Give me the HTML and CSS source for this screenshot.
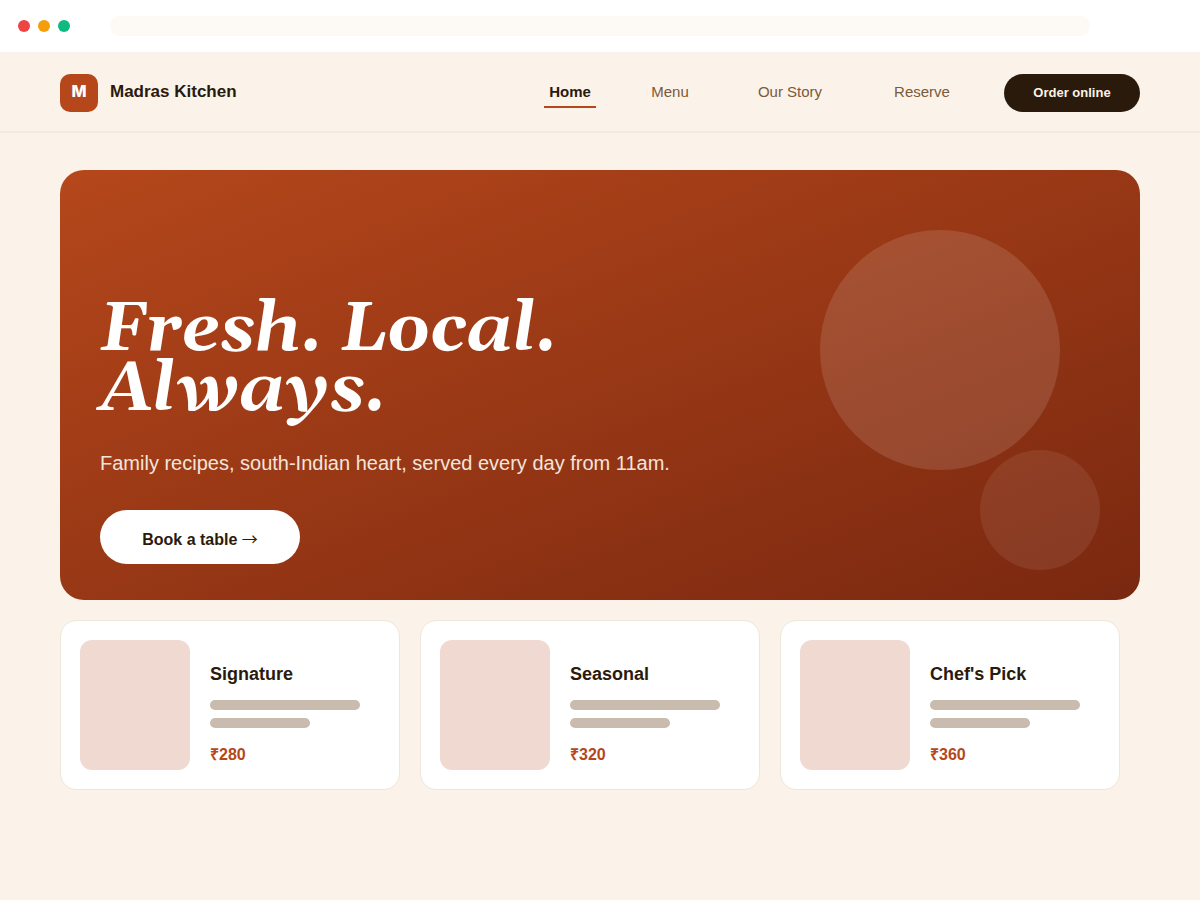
FILE: index.html
```html
<!DOCTYPE html>
<html lang="en">
<head>
<meta charset="utf-8">
<meta name="viewport" content="width=device-width, initial-scale=1">
<title>Madras Kitchen</title>
<link rel="stylesheet" href="styles.css">
</head>
<body>
<div class="browser-bar">
  <div class="dots">
    <span class="dot dot-red"></span>
    <span class="dot dot-amber"></span>
    <span class="dot dot-green"></span>
  </div>
  <div class="address"></div>
</div>
<header class="site-header">
  <div class="brand">
    <span class="logo">M</span>
    <span class="brand-name">Madras Kitchen</span>
  </div>
  <nav class="nav">
    <a class="nav-link active" href="#home">Home</a>
    <a class="nav-link" href="#menu">Menu</a>
    <a class="nav-link" href="#story">Our Story</a>
    <a class="nav-link" href="#reserve">Reserve</a>
  </nav>
  <button class="order" type="button">Order online</button>
</header>
<main class="main">
  <section class="hero">
    <span class="circle circle-large"></span>
    <span class="circle circle-small"></span>
    <h1 class="hero-title">Fresh. Local.<br>Always.</h1>
    <p class="hero-text">Family recipes, south-Indian heart, served every day from 11am.</p>
    <button class="book" type="button">Book a table <span class="arrow">→</span></button>
  </section>
  <section class="cards">
    <article class="card">
      <div class="thumb"></div>
      <div class="card-body">
        <h2 class="card-title">Signature</h2>
        <span class="line"></span>
        <span class="line line-short"></span>
        <p class="price">₹280</p>
      </div>
    </article>
    <article class="card">
      <div class="thumb"></div>
      <div class="card-body">
        <h2 class="card-title">Seasonal</h2>
        <span class="line"></span>
        <span class="line line-short"></span>
        <p class="price">₹320</p>
      </div>
    </article>
    <article class="card">
      <div class="thumb"></div>
      <div class="card-body">
        <h2 class="card-title">Chef's Pick</h2>
        <span class="line"></span>
        <span class="line line-short"></span>
        <p class="price">₹360</p>
      </div>
    </article>
  </section>
</main>
</body>
</html>
```
FILE: styles.css
```css
* {
  box-sizing: border-box;
}

body {
  margin: 0;
  min-height: 100vh;
  background: #fbf2e9;
  color: #2a1a0c;
  font-family: "Liberation Sans", Arial, sans-serif;
}

h1, h2, p {
  margin: 0;
}

button {
  border: 0;
  font-family: inherit;
  font-weight: 700;
  cursor: pointer;
}

.browser-bar {
  display: flex;
  align-items: center;
  gap: 40px;
  height: 52px;
  padding: 0 110px 0 18px;
  background: #ffffff;
}

.dots {
  display: flex;
  gap: 8px;
}

.dot {
  width: 12px;
  height: 12px;
  border-radius: 50%;
}

.dot-red { background: #ef4444; }
.dot-amber { background: #f59e0b; }
.dot-green { background: #10b981; }

.address {
  flex: 1;
  height: 20px;
  border-radius: 10px;
  background: #fdf9f4;
}

.site-header {
  display: flex;
  align-items: center;
  gap: 20px;
  padding: 22px 60px 19px;
  border-bottom: 2px solid #f4eadf;
}

.brand {
  display: flex;
  align-items: center;
  gap: 12px;
  margin-right: auto;
}

.logo {
  width: 38px;
  height: 38px;
  border-radius: 10px;
  background: #b5471b;
  color: #ffffff;
  font-family: Inter, "Liberation Sans", sans-serif;
  font-size: 16px;
  font-weight: 800;
  line-height: 34px;
  text-align: center;
}

.brand-name {
  padding-bottom: 2px;
  font-size: 17px;
  font-weight: 700;
  line-height: 20px;
}

.nav {
  display: grid;
  grid-template-columns: 100px 100px 140px 124px;
  justify-items: center;
}

.nav-link {
  padding: 4px 5px;
  border-bottom: 2px solid transparent;
  color: #7a5a3a;
  font-size: 15px;
  line-height: 20px;
  text-decoration: none;
}

.nav-link.active {
  border-color: #b5471b;
  color: #2a1a0c;
  font-weight: 700;
}

.order {
  width: 136px;
  height: 38px;
  padding: 0 0 2px;
  border-radius: 19px;
  background: #2a1a0c;
  color: #fbf1e7;
  font-size: 13px;
}

.main {
  padding: 37px 60px 60px;
}

.hero {
  position: relative;
  display: flex;
  flex-direction: column;
  align-items: flex-start;
  justify-content: flex-end;
  min-height: 430px;
  padding: 36px 40px;
  border-radius: 24px;
  overflow: hidden;
  background: linear-gradient(to bottom right, #b5471b, #7a2810);
  color: #ffffff;
}

.circle {
  position: absolute;
  border-radius: 50%;
  background: #ffffff;
}

.circle-large {
  top: 60px;
  right: 80px;
  width: 240px;
  height: 240px;
  opacity: 0.12;
}

.circle-small {
  top: 280px;
  right: 40px;
  width: 120px;
  height: 120px;
  opacity: 0.08;
}

.hero-title {
  position: relative;
  font-family: Georgia, Gelasio, "Liberation Serif", serif;
  font-size: 68px;
  font-style: italic;
  font-weight: 700;
  line-height: 60px;
}

.hero-text {
  position: relative;
  margin: 31px 0 35px;
  font-size: 20px;
  line-height: 24px;
  color: #f4e4dc;
}

.book {
  position: relative;
  width: 200px;
  height: 54px;
  padding: 4px 0 0;
  border-radius: 27px;
  background: #ffffff;
  color: #2a1a0c;
  font-size: 16px;
  line-height: 20px;
}

.arrow {
  font-family: "Noto Sans CJK JP", sans-serif;
  font-weight: 400;
}

.cards {
  display: grid;
  grid-template-columns: repeat(3, 1fr);
  gap: 20px;
  padding: 20px 20px 0 0;
}

.card {
  display: flex;
  gap: 20px;
  padding: 19px;
  border: 1px solid #efe6da;
  border-radius: 16px;
  background: #ffffff;
}

.thumb {
  flex: none;
  width: 110px;
  height: 130px;
  border-radius: 12px;
  background: #f0d9d1;
}

.card-body {
  flex: 1;
  display: flex;
  flex-direction: column;
  gap: 8px;
  padding: 24px 20px 0 0;
}

.card-title {
  margin-bottom: 8px;
  font-size: 18px;
  line-height: 20px;
}

.line {
  width: 100%;
  height: 10px;
  border-radius: 5px;
  background: #c9bcae;
}

.line-short {
  width: 100px;
}

.price {
  margin-top: 9px;
  color: #b5471b;
  font-size: 16px;
  font-weight: 700;
  line-height: 20px;
}
```
